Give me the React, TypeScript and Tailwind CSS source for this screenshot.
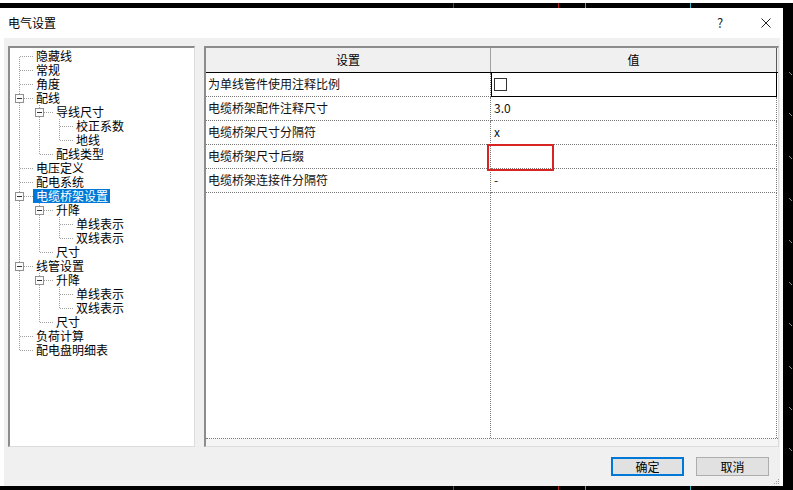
import React from "react";

type Node = { l: string; sel?: boolean; c?: Node[] };

const tree: Node[] = [
  { l: "隐藏线" },
  { l: "常规" },
  { l: "角度" },
  {
    l: "配线",
    c: [
      { l: "导线尺寸", c: [{ l: "校正系数" }, { l: "地线" }] },
      { l: "配线类型" },
    ],
  },
  { l: "电压定义" },
  { l: "配电系统" },
  {
    l: "电缆桥架设置",
    sel: true,
    c: [{ l: "升降", c: [{ l: "单线表示" }, { l: "双线表示" }] }, { l: "尺寸" }],
  },
  {
    l: "线管设置",
    c: [{ l: "升降", c: [{ l: "单线表示" }, { l: "双线表示" }] }, { l: "尺寸" }],
  },
  { l: "负荷计算" },
  { l: "配电盘明细表" },
];

type Flat = {
  label: string;
  guides: boolean[];
  hasTop: boolean;
  hasNext: boolean;
  hasChildren: boolean;
  sel: boolean;
};

function flatten(nodes: Node[], level: number, guides: boolean[], out: Flat[]) {
  nodes.forEach((n, i) => {
    const isLast = i === nodes.length - 1;
    out.push({
      label: n.l,
      guides,
      hasTop: !(level === 0 && i === 0),
      hasNext: !isLast,
      hasChildren: !!n.c,
      sel: !!n.sel,
    });
    if (n.c) flatten(n.c, level + 1, [...guides, !isLast], out);
  });
  return out;
}

const rows = flatten(tree, 0, [], []);
const DOT = "#a0a0a0";

function Guide({ on }: { on: boolean }) {
  return (
    <svg width="20" height="14" className="block shrink-0" shapeRendering="crispEdges">
      {on && <line x1="9.5" x2="9.5" y1="0" y2="14" stroke={DOT} strokeDasharray="1 1" />}
    </svg>
  );
}

function Connector({ hasTop, hasNext, hasChildren }: { hasTop: boolean; hasNext: boolean; hasChildren: boolean }) {
  return (
    <svg width="23" height="14" className="block shrink-0" shapeRendering="crispEdges">
      {(hasTop || hasNext) && (
        <line
          x1="9.5"
          x2="9.5"
          y1={hasTop ? 0 : 8}
          y2={hasNext ? 14 : 7}
          stroke={DOT}
          strokeDasharray="1 1"
        />
      )}
      <line x1={hasChildren ? 14 : 10} x2="23" y1="7.5" y2="7.5" stroke={DOT} strokeDasharray="1 1" />
      {hasChildren && (
        <>
          <rect x="5.5" y="3.5" width="8" height="8" fill="#fbfbfb" stroke="#919191" />
          <line x1="7" x2="12" y1="7.5" y2="7.5" stroke="#333" />
        </>
      )}
    </svg>
  );
}

const gridRows = [
  { k: "为单线管件使用注释比例", v: "__check" },
  { k: "电缆桥架配件注释尺寸", v: "3.0" },
  { k: "电缆桥架尺寸分隔符", v: "x" },
  { k: "电缆桥架尺寸后缀", v: "" },
  { k: "电缆桥架连接件分隔符", v: "-" },
];

const ticksY = [72, 113, 156, 198, 240, 282, 323, 366, 407, 448];

function Band({ h }: { h: number }) {
  return (
    <svg width="793" height={h} className="block shrink-0" shapeRendering="crispEdges">
      <rect x="0" y="0" width="793" height={h} fill="#000" />
      <rect x="453" y="0" width="1" height={h} fill="#b02020" />
      <rect x="558" y="0" width="1" height={h} fill="#b02020" />
      <rect x="585" y="0" width="1" height={h} fill="#30b0c0" />
      <rect x="690" y="0" width="1" height={h} fill="#30b0c0" />
    </svg>
  );
}

export default function App() {
  return (
    <div className="relative flex h-[490px] w-[793px] flex-col overflow-hidden bg-black font-['Noto_Sans_CJK_SC','Noto_Sans',sans-serif] text-[12px] text-black">
      <div className="h-[3px] shrink-0 bg-white" />
      <Band h={5} />
      <div className="flex h-[478px] shrink-0">
        {/* Dialog */}
        <div className="flex w-[783px] shrink-0 flex-col">
          {/* Title bar */}
          <div className="flex h-[30px] shrink-0 items-center bg-white pl-[8px] pr-[12px]">
            <span className="text-[12px] leading-[14px] text-black">电气设置</span>
            <div className="flex-1" />
            <span className="w-[12px] text-center text-[13px] leading-[14px] text-[#222]">?</span>
            <div className="w-[35px]" />
            <svg width="10" height="10" viewBox="0 0 10 10" className="block">
              <path d="M0.5 0.5L9.5 9.5M9.5 0.5L0.5 9.5" stroke="#222" strokeWidth="1" fill="none" />
            </svg>
          </div>
          {/* Body */}
          <div className="relative flex h-[448px] shrink-0 flex-col border-l-4 border-r-[3px] border-white bg-[#f0f0f0]">
            <div className="flex gap-[9px] pl-[4px] pt-[8px]">
              {/* Tree panel */}
              <div className="h-[401px] w-[187px] shrink-0 border-b border-l-2 border-r border-t-2 border-b-[#dcdcdc] border-l-[#8c8c8c] border-r-[#dcdcdc] border-t-[#8c8c8c] bg-white pt-[1px]">
                {rows.map((r, i) => (
                  <div key={i} className="flex h-[14px] items-center">
                    {r.guides.map((g, j) => (
                      <Guide key={j} on={g} />
                    ))}
                    <Connector hasTop={r.hasTop} hasNext={r.hasNext} hasChildren={r.hasChildren} />
                    <span
                      className={
                        r.sel
                          ? "h-[14px] whitespace-nowrap bg-[#0078d7] pl-[3px] pr-[2px] leading-[14px] text-white"
                          : "h-[14px] whitespace-nowrap pl-[3px] pr-[2px] leading-[14px] text-black"
                      }
                    >
                      {r.label}
                    </span>
                  </div>
                ))}
              </div>
              {/* Grid panel */}
              <div className="flex h-[401px] w-[575px] shrink-0 flex-col border-b border-l-2 border-r border-t-2 border-b-[#dcdcdc] border-l-[#8c8c8c] border-r-[#dcdcdc] border-t-[#8c8c8c] bg-white">
                {/* Header */}
                <div className="flex h-[25px] shrink-0 border-b border-black bg-[#f0f0f0]">
                  <div className="flex w-[285px] shrink-0 items-center justify-center border-r border-[#a0a0a0] leading-[14px]">
                    设置
                  </div>
                  <div className="flex w-[286px] shrink-0 items-center justify-center border-r border-[#5a5a5a] leading-[14px]">
                    值
                  </div>
                </div>
                {/* Body */}
                <div className="flex flex-1 flex-col border-b border-dotted border-[#7a7a7a]">
                  {gridRows.map((r, i) => (
                    <div key={i} className="flex h-[24px] shrink-0">
                      <div className="flex w-[285px] shrink-0 items-center border-b border-r border-dotted border-[#7a7a7a] pb-[2px] pl-[2px] leading-[14px] text-[#111]">
                        {r.k}
                      </div>
                      {r.v === "__check" ? (
                        <div className="flex w-[286px] shrink-0 items-center border-b border-l border-r border-black pl-[2px]">
                          <div className="h-[13px] w-[13px] border border-[#333] bg-white" />
                        </div>
                      ) : (
                        <div className="flex w-[286px] shrink-0 items-center border-b border-r border-dotted border-[#7a7a7a] pb-[2px] pl-[3px] leading-[14px] text-[#111]">
                          {r.v}
                        </div>
                      )}
                    </div>
                  ))}
                  <div className="flex flex-1">
                    <div className="w-[285px] shrink-0 border-r border-dotted border-[#7a7a7a]" />
                    <div className="w-[286px] shrink-0 border-r border-dotted border-[#7a7a7a]" />
                  </div>
                </div>
                <div className="h-[7px] shrink-0 bg-[#f5f5f5]" />
              </div>
            </div>
            {/* Buttons */}
            <div className="mt-[10px] flex justify-end gap-[12px] pr-[11px]">
              <button className="flex h-[19px] w-[73px] items-center justify-center border-2 border-[#0078d7] bg-[#e1e1e1] text-[12px] leading-[14px] text-black">
                确定
              </button>
              <button className="flex h-[19px] w-[73px] items-center justify-center border border-[#adadad] bg-[#e1e1e1] text-[12px] leading-[14px] text-black">
                取消
              </button>
            </div>
            {/* resize grip */}
            <svg width="7" height="7" className="absolute bottom-[1px] right-0 block" shapeRendering="crispEdges">
              <rect x="5" y="1" width="1" height="1" fill="#a0a0a0" />
              <rect x="3" y="3" width="1" height="1" fill="#a0a0a0" />
              <rect x="5" y="3" width="1" height="1" fill="#a0a0a0" />
              <rect x="1" y="5" width="1" height="1" fill="#a0a0a0" />
              <rect x="3" y="5" width="1" height="1" fill="#a0a0a0" />
              <rect x="5" y="5" width="1" height="1" fill="#a0a0a0" />
            </svg>
          </div>
        </div>
        {/* background canvas strip */}
        <svg width="10" height="478" className="block shrink-0">
          <rect x="0" y="0" width="10" height="478" fill="#000" />
          {ticksY.map((y) => (
            <line key={y} x1="6" y1={y - 8} x2="9" y2={y - 5} stroke="#8a8a8a" strokeWidth="1" />
          ))}
        </svg>
      </div>
      <Band h={4} />
      {/* red annotation */}
      <div className="absolute left-[487px] top-[144px] h-[27px] w-[67px] border-2 border-[#d92424]" />
    </div>
  );
}
